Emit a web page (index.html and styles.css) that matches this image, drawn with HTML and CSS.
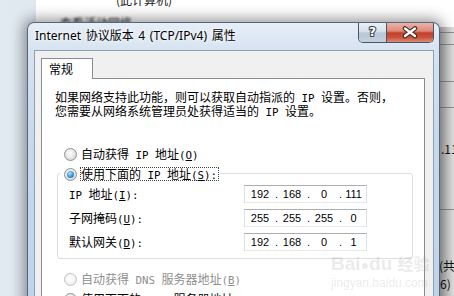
FILE: index.html
```html
<!DOCTYPE html>
<html lang="zh-CN">
<head>
<meta charset="utf-8">
<title>Internet 协议版本 4 (TCP/IPv4) 属性</title>
<link rel="stylesheet" href="styles.css">
</head>
<body>
<div class="desk">
  <div class="bg-top1">(此计算机)</div>
  <div class="bg-top2">查看活动网络</div>
  <div class="strip">
    <div class="srow r1"></div>
    <div class="srow r2"></div>
    <div class="srow r3"></div>
    <div class="srow r4"></div>
    <div class="srow r5"><span class="stxt t1">.111</span></div>
    <div class="srow r6"><span class="stxt t2">(共</span><span class="stxt t3">6)</span></div>
  </div>
</div>

<div class="dlg">
  <div class="titlebar">
    <div class="title">Internet 协议版本 4 (TCP/IPv4) 属性</div>
    <div class="caps">
      <div class="cap help">
        <svg width="27" height="19" viewBox="0 0 27 19"><text x="13.5" y="13" text-anchor="middle" font-family="DejaVu Sans" font-weight="bold" font-size="12" fill="#fff" stroke="#3a4656" stroke-width="2.2" paint-order="stroke" stroke-linejoin="round">?</text></svg>
      </div>
      <div class="cap close">
        <svg width="46" height="19" viewBox="0 0 46 19"><path d="M18 5.5 L28 13 M28 5.5 L18 13" stroke="#3b2520" stroke-width="4.6" stroke-linecap="round"/><path d="M18 5.5 L28 13 M28 5.5 L18 13" stroke="#fff" stroke-width="2.4" stroke-linecap="round"/></svg>
      </div>
    </div>
  </div>
  <div class="client">
    <div class="tabs"><div class="tab">常规</div></div>
    <div class="panel">
      <p class="intro">如果网络支持此功能，则可以获取自动指派的<span class="m"> IP </span>设置。否则，<br>您需要从网络系统管理员处获得适当的<span class="m"> IP </span>设置。</p>
      <div class="opt first"><span class="radio"></span><span class="otxt">自动获得<span class="m"> IP </span>地址<span class="m">(<u>O</u>)</span></span></div>
      <div class="group">
        <div class="opt head"><span class="radio on"><i></i></span><span class="focus">使用下面的<span class="m"> IP </span>地址<span class="m">(<u>S</u>):</span></span></div>
        <div class="row first"><span class="lbl"><span class="m">IP </span>地址<span class="m">(<u>I</u>):</span></span>
          <div class="ip"><span class="f">192</span><span class="d">.</span><span class="f">168</span><span class="d">.</span><span class="f">0</span><span class="d">.</span><span class="f last">111</span></div>
        </div>
        <div class="row"><span class="lbl">子网掩码<span class="m">(<u>U</u>):</span></span>
          <div class="ip"><span class="f">255</span><span class="d">.</span><span class="f">255</span><span class="d">.</span><span class="f">255</span><span class="d">.</span><span class="f last">0</span></div>
        </div>
        <div class="row"><span class="lbl">默认网关<span class="m">(<u>D</u>):</span></span>
          <div class="ip"><span class="f">192</span><span class="d">.</span><span class="f">168</span><span class="d">.</span><span class="f">0</span><span class="d">.</span><span class="f last">1</span></div>
        </div>
      </div>
      <div class="opt dns1 dis"><span class="radio"></span><span class="otxt">自动获得<span class="m"> DNS </span>服务器地址<span class="m">(<u>B</u>)</span></span></div>
      <div class="opt dns2"><span class="radio on"><i></i></span><span class="otxt">使用下面的<span class="m"> DNS </span>服务器地址<span class="m">(<u>E</u>):</span></span></div>
    </div>
  </div>
</div>

<div class="wm">
  <div class="wm-logo">Bai<span class="paw">●</span>du <span class="wm-cn">经验</span></div>
  <div class="wm-url">jingyan.baidu.com</div>
</div>
</body>
</html>
```

FILE: styles.css
```css
html, body {
  margin: 0;
  padding: 0;
}
body {
  width: 454px;
  height: 296px;
  overflow: hidden;
  position: relative;
  background: linear-gradient(to right, #e1e9f1 0, #dfe7ef 36px, #ffffff 36px);
  font-family: "Noto Sans CJK SC", sans-serif;
  color: #000;
}

/* background window behind the dialog */
.desk {
  position: absolute;
  inset: 0;
}
.bg-top1 {
  position: absolute;
  left: 116px;
  top: -6px;
  font-size: 12px;
  line-height: 12px;
  color: #222;
}
.bg-top2 {
  position: absolute;
  left: 60px;
  top: 17px;
  font-size: 12px;
  line-height: 12px;
  color: #2a2a2a;
  filter: blur(0.8px);
}
.strip {
  position: absolute;
  left: 436px;
  top: 27px;
  width: 18px;
  height: 269px;
  display: flex;
  flex-direction: column;
  background: linear-gradient(to right, #b0b0b0, #e0e0e0);
}
.srow {
  border-bottom: 1px solid #8c8c8c;
  position: relative;
}
.r1 { height: 5px; }
.r2 { height: 11px; }
.r3 { height: 36px; }
.r4 { height: 25px; }
.r5 { height: 101px; }
.r6 { flex: 1; border-bottom: none; }
.stxt {
  position: absolute;
  left: 5px;
  font-family: "Noto Sans CJK SC", sans-serif;
  font-size: 12px;
  line-height: 14px;
  color: #111;
  white-space: nowrap;
}
.t1 { top: 34px; }
.t2 { top: 49px; left: 3px; }
.t3 { top: 67px; left: 4px; }

/* dialog window */
.dlg {
  position: absolute;
  left: 27px;
  top: 22px;
  width: 411px;
  height: 290px;
  border: 1px solid #55677c;
  border-bottom: none;
  border-radius: 7px 7px 0 0;
  background: linear-gradient(to bottom, #e6eef7 0, #d6e3f0 28px, #c6d9ed 120px, #bed3ea 100%);
  box-shadow: 0 0 14px 3px rgba(0, 0, 0, 0.42);
  display: flex;
  flex-direction: column;
}
.titlebar {
  height: 27px;
  display: flex;
  align-items: flex-start;
  flex: none;
}
.title {
  margin-top: 5px;
  padding-left: 7px;
  font-family: "Noto Sans", "Noto Sans CJK SC", sans-serif;
  font-size: 12px;
  line-height: 16px;
  word-spacing: 1.5px;
  color: #000;
  white-space: nowrap;
  text-shadow: 0 0 6px #fff, 0 0 3px #fff;
}
.caps {
  margin-left: auto;
  margin-right: 5px;
  display: flex;
  height: 20px;
  box-sizing: border-box;
  border: 1px solid #45556a;
  border-top: none;
  border-radius: 0 0 5px 5px;
  overflow: hidden;
}
.cap {
  height: 19px;
  display: flex;
  align-items: center;
  justify-content: center;
}
.help {
  width: 27px;
  border-right: 1px solid #45556a;
  background: linear-gradient(to bottom, #e9eff5 0, #d7e0ea 45%, #bac8d6 52%, #c3d0dc 100%);
}
.close {
  width: 46px;
  background: linear-gradient(to bottom, #ebb3a7 0, #de8b7b 42%, #c4402a 52%, #c8513b 75%, #de8a70 100%);
}
.cap svg { display: block; }

.client {
  flex: 1;
  margin: 0 5px 0 6px;
  border: 1px solid #8d9fb3;
  border-bottom: none;
  background: #f0f0f0;
  padding: 7px 8px 0 6px;
  display: flex;
  flex-direction: column;
}
.tabs {
  display: flex;
  flex: none;
}
.tab {
  width: 52px;
  height: 21px;
  box-sizing: border-box;
  border: 1px solid #898c95;
  border-bottom: none;
  background: #fff;
  margin-bottom: -1px;
  position: relative;
  z-index: 1;
  padding-left: 7px;
  font-size: 12px;
  line-height: 19px;
}
.panel {
  flex: 1;
  border: 1px solid #898c95;
  border-bottom: none;
  background: #fff;
  padding: 11px 0 0 13px;
  display: flex;
  flex-direction: column;
  align-items: flex-start;
  font-size: 12px;
}
.intro {
  margin: 0;
  font-size: 12px;
  line-height: 14px;
  white-space: nowrap;
}
.m {
  font-family: "DejaVu Sans Mono", monospace;
  font-size: 10.8px;
  line-height: 8px;
  white-space: pre;
}
.opt {
  display: flex;
  align-items: center;
  height: 14px;
  margin-left: 9px;
  line-height: 14px;
  white-space: nowrap;
}
.opt.first { margin-top: 29px; }
.otxt { line-height: 14px; height: 14px; }

.radio {
  width: 13px;
  height: 13px;
  box-sizing: border-box;
  border-radius: 50%;
  border: 1px solid #8e8f8f;
  background: radial-gradient(circle at 45% 40%, #ffffff 0, #f2f2f2 30%, #d9d9d9 75%, #c6c6c6 100%);
  display: flex;
  align-items: center;
  justify-content: center;
  margin-right: 4px;
  flex: none;
}
.radio.on i {
  display: block;
  width: 7px;
  height: 7px;
  border-radius: 50%;
  background: radial-gradient(circle at 40% 35%, #b5e6fc 0, #47a0df 45%, #145aa3 100%);
}
.dis { color: #8f8f8f; }
.dis .radio {
  border-color: #c2c2c2;
  background: radial-gradient(circle at 45% 40%, #ffffff 0, #f6f6f6 40%, #e6e6e6 100%);
}

.group {
  margin: 12px 0 0 2px;
  width: 356px;
  box-sizing: border-box;
  border: 1px solid #d5dfe5;
  border-radius: 3px;
  padding: 0 0 7px 11px;
  display: flex;
  flex-direction: column;
  align-items: flex-start;
}
.opt.head {
  margin-top: -7px;
  margin-left: -9px;
  padding: 0 1px 0 4px;
  background: #fff;
}
.head .radio { margin-right: 3px; }
.focus {
  border: 1px dotted #444;
  line-height: 12px;
  height: 12px;
  padding-right: 1px;
}
.row {
  display: flex;
  align-items: center;
  height: 18px;
  margin-top: 6px;
  white-space: nowrap;
}
.row.first { margin-top: 4px; }
.lbl {
  width: 175px;
  line-height: 14px;
  height: 14px;
}
.ip {
  width: 123px;
  height: 18px;
  box-sizing: border-box;
  border: 1px solid #dbdfe6;
  border-top-color: #abadb3;
  border-bottom-color: #e3e9ef;
  background: #fff;
  display: flex;
  align-items: center;
  font-family: "Liberation Sans", Arial, sans-serif;
  font-size: 11px;
  line-height: 16px;
}
.f {
  width: 30px;
  text-align: center;
  flex: none;
}
.f.last { width: 25px; }
.d {
  width: 2px;
  flex: none;
  overflow: visible;
}

.opt.dns1 { margin-top: 13px; }
.opt.dns2 { margin-top: 6px; }

/* watermark overlay */
.wm {
  position: absolute;
  left: 331px;
  top: 252px;
  color: rgba(150, 150, 150, 0.2);
  pointer-events: none;
}
.wm-logo {
  font-family: "Liberation Sans", Arial, sans-serif;
  font-weight: bold;
  font-size: 19px;
  line-height: 22px;
  white-space: nowrap;
}
.paw { font-size: 14px; }
.wm-cn {
  font-family: "Noto Sans CJK SC", sans-serif;
  font-size: 16px;
}
.wm-url {
  font-family: "Liberation Sans", Arial, sans-serif;
  font-size: 12px;
  line-height: 14px;
  white-space: nowrap;
}
```
